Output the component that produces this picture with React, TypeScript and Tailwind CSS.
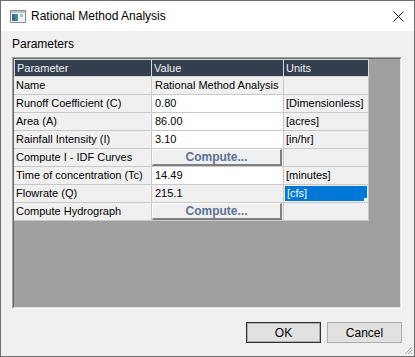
import React from "react";

// Rational Method dialog — classic WinForms property grid look

type Row = {
  name: string;
  value?: string;
  units?: string;
  editable?: boolean;
  button?: boolean;
  selected?: boolean;
};

const ROWS: Row[] = [
  { name: "Name", value: "Rational Method Analysis" },
  { name: "Runoff Coefficient (C)", value: "0.80", units: "[Dimensionless]", editable: true },
  { name: "Area (A)", value: "86.00", units: "[acres]", editable: true },
  { name: "Rainfall Intensity (I)", value: "3.10", units: "[in/hr]", editable: true },
  { name: "Compute I - IDF Curves", button: true },
  { name: "Time of concentration (Tc)", value: "14.49", units: "[minutes]", editable: true },
  { name: "Flowrate (Q)", value: "215.1", units: "[cfs]", selected: true },
  { name: "Compute Hydrograph", button: true },
];

const FONT = { fontFamily: '"Liberation Sans", Arial, sans-serif' };

function AppIcon() {
  return (
    <svg width="16" height="13" viewBox="0 0 16 13">
      <rect x="0.5" y="0.5" width="15" height="12" fill="#f4f4f4" stroke="#8a8a8a" />
      <rect x="1" y="1" width="14" height="2" fill="#b9c4cc" />
      <rect x="2" y="4" width="6" height="7" fill="#3f8f7a" />
      <rect x="2" y="4" width="3" height="7" fill="#2f6f8f" />
      <rect x="10" y="4" width="3" height="3" fill="#9cc7d8" />
    </svg>
  );
}

function GridRow({ row }: { row: Row }) {
  return (
    <div className="flex h-[18px] text-[11px] leading-[17px] text-black">
      <div className="w-[138px] shrink-0 bg-[#f0f0f0] border-r border-b border-[#c8c8c8] pl-[2px] whitespace-nowrap overflow-hidden">
        {row.name}
      </div>
      {row.button ? (
        <div className="w-[132px] shrink-0 bg-[#f0f0f0] border-r border-b border-[#c8c8c8] pr-[1px]">
          <div className="h-full border-t border-l border-white border-b-2 border-r-2 border-b-[#808080] border-r-[#808080] flex items-center justify-center font-bold text-[12px] text-[#5a7396] leading-none">
            Compute...
          </div>
        </div>
      ) : (
        <div
          className={`w-[132px] shrink-0 border-r border-b border-[#c8c8c8] pl-[3px] whitespace-nowrap overflow-hidden ${
            row.editable ? "bg-white" : "bg-[#f0f0f0]"
          }`}
        >
          {row.value}
        </div>
      )}
      <div className="w-[85px] shrink-0 bg-[#f0f0f0] border-r border-b border-[#c8c8c8] p-[1px]">
        {row.selected ? (
          <div className="relative h-full bg-[#0078d7] text-white pl-[2px] leading-[15px]">
            {row.units}
            <div className="absolute right-0 bottom-0 w-[3px] h-[3px] bg-white" />
          </div>
        ) : (
          <div className="pl-[1px] leading-[15px]">{row.units}</div>
        )}
      </div>
    </div>
  );
}

export default function App() {
  return (
    <div
      className="w-[415px] h-[357px] border border-[#6e6e6e] bg-[#f0f0f0] flex flex-col"
      style={FONT}
    >
      {/* Title bar */}
      <div className="h-[30px] bg-white flex items-center pl-[9px] pr-[10px] shrink-0">
        <AppIcon />
        <span className="ml-[5px] text-[12px] text-black">Rational Method Analysis</span>
        <svg className="ml-auto" width="11" height="11" viewBox="0 0 11 11">
          <path d="M0.5 0.5 L10.5 10.5 M10.5 0.5 L0.5 10.5" stroke="#111" strokeWidth="1" />
        </svg>
      </div>

      {/* Body */}
      <div className="relative flex-1 pl-[11px] pr-[12px] pt-[6px] flex flex-col">
        <div className="h-[14px] leading-[14px] text-[12px] text-black">Parameters</div>

        <div className="mt-[6px] w-[390px] h-[252px] border-t border-l border-[#a0a0a0] border-b border-r border-b-white border-r-white">
          <div className="h-full border-t border-l border-[#696969] border-b border-r border-b-[#e3e3e3] border-r-[#e3e3e3] bg-[#a0a0a0]">
            {/* Header */}
            <div className="flex h-[18px] text-[11px] leading-[16px] text-[#f2f2f2]">
              <div className="w-[138px] shrink-0 bg-[#333e4f] border-t border-l border-r border-b border-[#d8d8d8] pl-[2px]">
                Parameter
              </div>
              <div className="w-[132px] shrink-0 bg-[#333e4f] border-t border-r border-b border-[#d8d8d8] pl-[2px]">
                Value
              </div>
              <div className="w-[85px] shrink-0 bg-[#333e4f] border-t border-r border-b border-[#d8d8d8] pl-[2px]">
                Units
              </div>
            </div>
            {ROWS.map((r) => (
              <GridRow key={r.name} row={r} />
            ))}
          </div>
        </div>

        {/* Buttons */}
        <div className="mt-[13px] flex justify-end gap-[6px]">
          <button className="w-[75px] h-[21px] bg-[#e1e1e1] border border-[#333] outline outline-1 outline-[#adadad] -outline-offset-2 text-[12px] leading-none text-black">
            OK
          </button>
          <button className="w-[75px] h-[21px] bg-[#e1e1e1] border border-[#adadad] text-[12px] leading-none text-black">
            Cancel
          </button>
        </div>

        {/* Resize grip */}
        <svg className="absolute right-[1px] bottom-[1px]" width="10" height="10" viewBox="0 0 10 10">
          <g fill="#a0a0a0">
            <rect x="8" y="2" width="1" height="1" />
            <rect x="7" y="3" width="1" height="1" />
            <rect x="6" y="4" width="1" height="1" />
            <rect x="5" y="5" width="1" height="1" />
            <rect x="4" y="6" width="1" height="1" />
            <rect x="3" y="7" width="1" height="1" />
            <rect x="2" y="8" width="1" height="1" />
            <rect x="8" y="5" width="1" height="1" />
            <rect x="7" y="6" width="1" height="1" />
            <rect x="6" y="7" width="1" height="1" />
            <rect x="5" y="8" width="1" height="1" />
            <rect x="8" y="8" width="1" height="1" />
          </g>
        </svg>
      </div>
    </div>
  );
}
